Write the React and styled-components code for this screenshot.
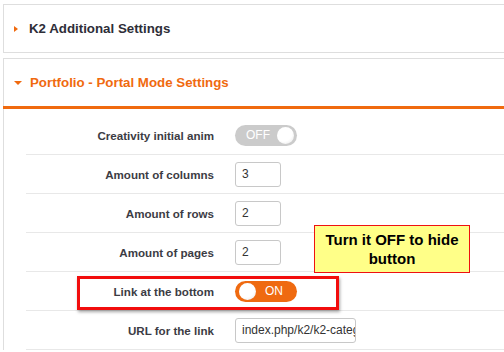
import React from 'react'
import styled, { createGlobalStyle } from 'styled-components'

const GlobalStyle = createGlobalStyle`
    html, body {
        margin: 0;
        padding: 0;
        background: #fff;
        overflow: hidden;
    }
    body {
        font-family: "Liberation Sans", Arial, sans-serif;
    }
`

const Page = styled.div`
    position: relative;
    width: 504px;
    height: 352px;
    overflow: hidden;
    padding: 4px 0 0 3px;
    box-sizing: border-box;
`

const Panel = styled.div`
    width: 540px;
    border: 1px solid #dedede;
    border-bottom: ${p => (p.open ? 'none' : '1px solid #dedede')};
    margin-bottom: 5px;
`

const Header = styled.div`
    display: flex;
    align-items: center;
    height: 47px;
    border-bottom: ${p => (p.open ? '3px solid #f06a0f' : 'none')};
    margin-left: ${p => (p.open ? '-1px' : '0')};
    padding-left: ${p => (p.open ? '11px' : '10px')};
`

const Arrow = styled.span`
    width: 0;
    height: 0;
    margin-right: ${p => (p.open ? '8px' : '11px')};
    ${p => p.open
        ? `border-left: 4px solid transparent;
           border-right: 4px solid transparent;
           border-top: 4px solid #f06a0f;`
        : `border-top: 3.5px solid transparent;
           border-bottom: 3.5px solid transparent;
           border-left: 4px solid #f06a0f;`}
`

const Title = styled.h3`
    margin: 0;
    font-size: 13.3px;
    font-weight: bold;
    color: ${p => (p.open ? '#f06a0f' : '#2e2e38')};
`

const Body = styled.div`
    padding-top: 7px;
`

const Row = styled.div`
    position: relative;
    display: grid;
    grid-template-columns: 188px auto;
    column-gap: 21px;
    align-items: center;
    height: 38px;
    margin-left: 22px;
    border-bottom: 1px solid #e8e8e8;
`

const Label = styled.label`
    text-align: right;
    font-size: 11.6px;
    font-weight: bold;
    color: #3c3c44;
`

const Input = styled.div`
    box-sizing: border-box;
    width: ${p => p.width}px;
    height: 25px;
    border: 1px solid #c8c8c8;
    border-radius: 3px;
    padding-left: 6px;
    font-size: 12px;
    line-height: 23px;
    color: #333;
    white-space: nowrap;
    overflow: hidden;
`

const Toggle = styled.div`
    position: relative;
    box-sizing: border-box;
    width: 62px;
    height: 21px;
    border-radius: 11px;
    background: ${p => (p.on ? '#ef6a10' : '#cbcbcb')};
    display: flex;
    align-items: center;
    padding: ${p => (p.on ? '0 0 0 30px' : '0 0 0 11px')};
    color: #fff;
    font-size: 12px;
`

const Knob = styled.span`
    position: absolute;
    top: 2px;
    ${p => (p.on ? 'left: 4px;' : 'right: 3px;')}
    width: 17px;
    height: 17px;
    border-radius: 50%;
    background: radial-gradient(circle at 40% 35%, #fff 55%, #e4e4e4 100%);
`

const Highlight = styled.div`
    position: absolute;
    left: 51px;
    top: 4px;
    width: 262px;
    height: 34px;
    box-sizing: border-box;
    border: 3px solid #f20d0d;
    box-shadow: 1px 2px 3px rgba(0, 0, 0, 0.35);
    pointer-events: none;
`

const Note = styled.div`
    position: absolute;
    left: 314px;
    top: 225px;
    width: 156px;
    height: 48px;
    box-sizing: border-box;
    background: #ffff88;
    border: 1px solid #ee1111;
    padding-top: 4px;
    text-align: center;
    font-size: 15px;
    font-weight: bold;
    line-height: 19px;
    color: #000;
`

const fields = [
    { label: 'Creativity initial anim', type: 'toggle', on: false },
    { label: 'Amount of columns', type: 'input', value: '3', width: 46 },
    { label: 'Amount of rows', type: 'input', value: '2', width: 46 },
    { label: 'Amount of pages', type: 'input', value: '2', width: 46 },
    { label: 'Link at the bottom', type: 'toggle', on: true, highlight: true },
    { label: 'URL for the link', type: 'input', value: 'index.php/k2/k2-category', width: 121 },
]

const App = () => (
    <Page>
        <GlobalStyle />
        <Panel>
            <Header>
                <Arrow />
                <Title>K2 Additional Settings</Title>
            </Header>
        </Panel>
        <Panel open>
            <Header open>
                <Arrow open />
                <Title open>Portfolio - Portal Mode Settings</Title>
            </Header>
            <Body>
                {fields.map(f => (
                    <Row key={f.label}>
                        <Label>{f.label}</Label>
                        {f.type === 'toggle' ? (
                            <Toggle on={f.on ? 1 : 0}>
                                {f.on ? 'ON' : 'OFF'}
                                <Knob on={f.on ? 1 : 0} />
                            </Toggle>
                        ) : (
                            <Input width={f.width}>{f.value}</Input>
                        )}
                        {f.highlight && <Highlight />}
                    </Row>
                ))}
            </Body>
        </Panel>
        <Note>Turn it OFF to hide button</Note>
    </Page>
)

export default App
